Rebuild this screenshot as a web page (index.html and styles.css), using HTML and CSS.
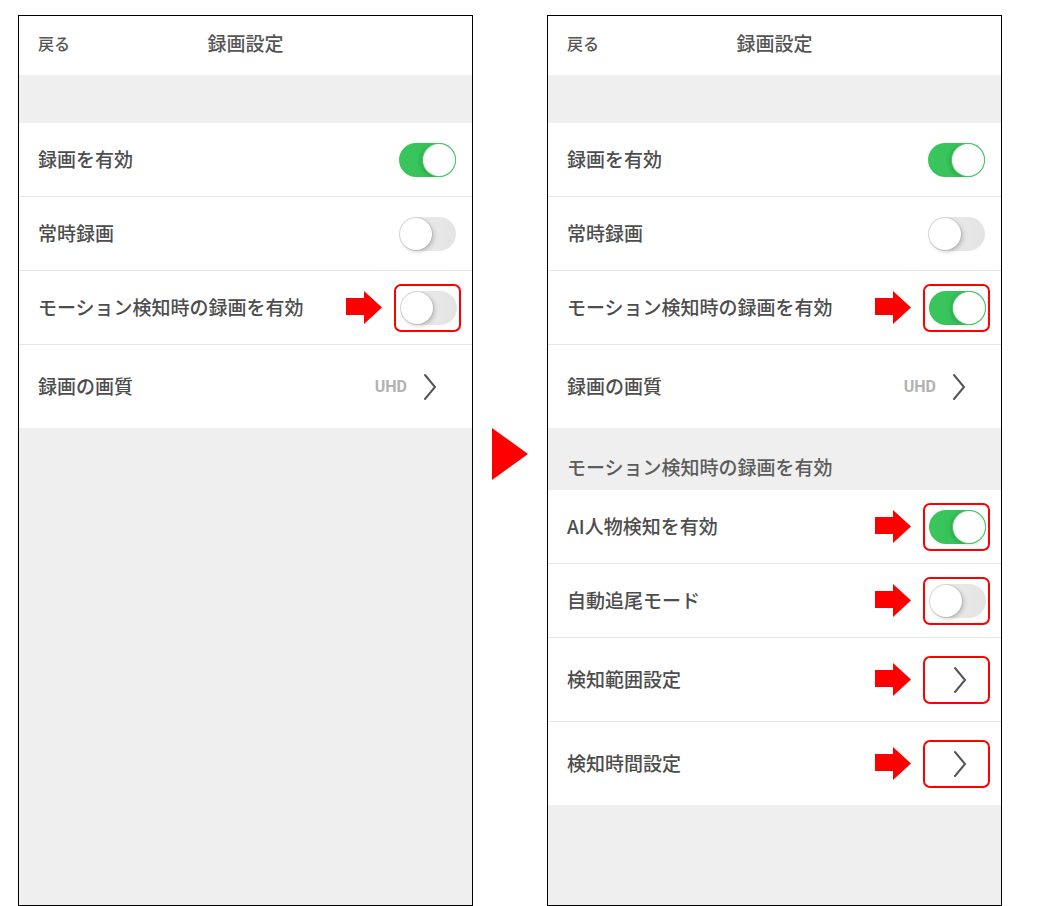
FILE: index.html
```html
<!DOCTYPE html>
<html lang="ja">
<head>
<meta charset="utf-8">
<title>録画設定</title>
<link rel="stylesheet" href="styles.css">
</head>
<body>
<div class="page">
  <section class="phone">
    <header class="nav">
      <span class="back">戻る</span>
      <h1 class="title">録画設定</h1>
    </header>
    <div class="spacer"></div>
    <ul class="group">
      <li class="row"><span class="label">録画を有効</span><span class="toggle on"></span></li>
      <li class="row"><span class="label">常時録画</span><span class="toggle"></span></li>
      <li class="row"><span class="label">モーション検知時の録画を有効</span>
        <span class="ctrl"><svg class="arrow" viewBox="0 0 36 33" width="36" height="33"><polygon points="0,7 18,7 18,0 36,16.5 18,33 18,24 0,24"/></svg><span class="mark"><span class="toggle"></span></span></span>
      </li>
      <li class="row tall last"><span class="label">録画の画質</span>
        <span class="value">UHD</span><svg class="chev" viewBox="0 0 14 28" width="14" height="28"><polyline points="2,2 12,14 2,26"/></svg>
      </li>
    </ul>
  </section>

  <div class="between">
    <svg class="bigtri" viewBox="0 0 36 52" width="36" height="52"><polygon points="0,0 36,26 0,52"/></svg>
  </div>

  <section class="phone">
    <header class="nav">
      <span class="back">戻る</span>
      <h1 class="title">録画設定</h1>
    </header>
    <div class="spacer"></div>
    <ul class="group">
      <li class="row"><span class="label">録画を有効</span><span class="toggle on"></span></li>
      <li class="row"><span class="label">常時録画</span><span class="toggle"></span></li>
      <li class="row"><span class="label">モーション検知時の録画を有効</span>
        <span class="ctrl"><svg class="arrow" viewBox="0 0 36 33" width="36" height="33"><polygon points="0,7 18,7 18,0 36,16.5 18,33 18,24 0,24"/></svg><span class="mark"><span class="toggle on"></span></span></span>
      </li>
      <li class="row tall last"><span class="label">録画の画質</span>
        <span class="value">UHD</span><svg class="chev" viewBox="0 0 14 28" width="14" height="28"><polyline points="2,2 12,14 2,26"/></svg>
      </li>
    </ul>
    <div class="section-head">モーション検知時の録画を有効</div>
    <ul class="group">
      <li class="row"><span class="label">AI人物検知を有効</span>
        <span class="ctrl"><svg class="arrow" viewBox="0 0 36 33" width="36" height="33"><polygon points="0,7 18,7 18,0 36,16.5 18,33 18,24 0,24"/></svg><span class="mark"><span class="toggle on"></span></span></span>
      </li>
      <li class="row"><span class="label">自動追尾モード</span>
        <span class="ctrl"><svg class="arrow" viewBox="0 0 36 33" width="36" height="33"><polygon points="0,7 18,7 18,0 36,16.5 18,33 18,24 0,24"/></svg><span class="mark"><span class="toggle"></span></span></span>
      </li>
      <li class="row tall"><span class="label">検知範囲設定</span>
        <span class="ctrl"><svg class="arrow" viewBox="0 0 36 33" width="36" height="33"><polygon points="0,7 18,7 18,0 36,16.5 18,33 18,24 0,24"/></svg><span class="mark chevbox"><svg class="chev" viewBox="0 0 14 28" width="14" height="28"><polyline points="2,2 12,14 2,26"/></svg></span></span>
      </li>
      <li class="row tall last"><span class="label">検知時間設定</span>
        <span class="ctrl"><svg class="arrow" viewBox="0 0 36 33" width="36" height="33"><polygon points="0,7 18,7 18,0 36,16.5 18,33 18,24 0,24"/></svg><span class="mark chevbox"><svg class="chev" viewBox="0 0 14 28" width="14" height="28"><polyline points="2,2 12,14 2,26"/></svg></span></span>
      </li>
    </ul>
  </section>
</div>
</body>
</html>
```

FILE: styles.css
```css
* { box-sizing: border-box; }

html, body {
  margin: 0;
  padding: 0;
  background: #fff;
}

body {
  font-family: "Noto Sans CJK JP", "Noto Sans", sans-serif;
  color: #505050;
}

.page {
  display: flex;
  align-items: stretch;
  padding: 15px 0 0 18px;
}

.phone {
  width: 455px;
  height: 891px;
  border: 1px solid #000;
  background: #efefef;
  display: flex;
  flex-direction: column;
}

.nav {
  height: 59px;
  background: #fff;
  display: flex;
  align-items: center;
  position: relative;
  padding: 0 19px 6px;
}

.back {
  font-size: 16px;
  font-weight: 500;
  color: #555;
}

.title {
  margin: 0;
  font-size: 19px;
  font-weight: 500;
  color: #555;
  position: absolute;
  left: 0;
  right: 0;
  text-align: center;
  pointer-events: none;
}

.spacer {
  height: 48px;
}

.group {
  list-style: none;
  margin: 0;
  padding: 0;
  background: #fff;
}

.row {
  height: 74px;
  border-bottom: 1px solid #e6e6e6;
  display: flex;
  align-items: center;
  padding: 0 16px 0 19px;
}

.row.tall {
  height: 84px;
}

.row.last {
  border-bottom: none;
  height: 83px;
}

.label {
  font-size: 19px;
  font-weight: 500;
  color: #4d4d4d;
  flex: 1;
  white-space: nowrap;
  margin-bottom: 3px;
}

.toggle {
  width: 57px;
  height: 34px;
  border-radius: 17px;
  background: linear-gradient(90deg, #ececec, #e4e4e4);
  position: relative;
  flex: none;
  display: block;
}

.toggle::after {
  content: "";
  position: absolute;
  top: 1px;
  left: 1px;
  width: 32px;
  height: 32px;
  border-radius: 50%;
  background: #fff;
  box-shadow: 0 0 0 1px rgba(0, 0, 0, 0.08), 2px 2px 4px rgba(0, 0, 0, 0.18);
}

.toggle.on {
  background: linear-gradient(90deg, #3ac55d, #34bf57);
}

.toggle.on::after {
  left: auto;
  right: 1px;
  box-shadow: 0 0 0 1px #4cc86a, -2px 1px 4px rgba(0, 0, 0, 0.18);
}

.ctrl {
  display: flex;
  align-items: center;
  gap: 12px;
  flex: none;
}

.arrow {
  display: block;
  fill: #ff0000;
}

.mark {
  display: flex;
  align-items: center;
  border: 2px solid #ff0000;
  border-radius: 7px;
  padding: 5px 2px 5px 4px;
  margin-right: -5px;
}

.mark.chevbox {
  width: 67px;
  height: 48px;
  padding: 0 21px 0 0;
  justify-content: flex-end;
}

.chev {
  display: block;
  fill: none;
  stroke: #555;
  stroke-width: 2;
  stroke-linecap: round;
  stroke-linejoin: miter;
}

.value {
  font-family: Roboto, "Noto Sans", sans-serif;
  font-weight: 700;
  font-size: 16px;
  color: #b2b2b2;
  margin-right: 16px;
}

.row > .chev {
  margin-right: 19px;
}

.section-head {
  height: 62px;
  display: flex;
  align-items: flex-end;
  padding: 0 19px 10px;
  font-size: 19px;
  font-weight: 500;
  color: #5c5c5c;
}

.between {
  width: 74px;
  display: flex;
  align-items: center;
  justify-content: center;
  padding-bottom: 14px;
}

.bigtri {
  display: block;
  fill: #ff0000;
}
```
